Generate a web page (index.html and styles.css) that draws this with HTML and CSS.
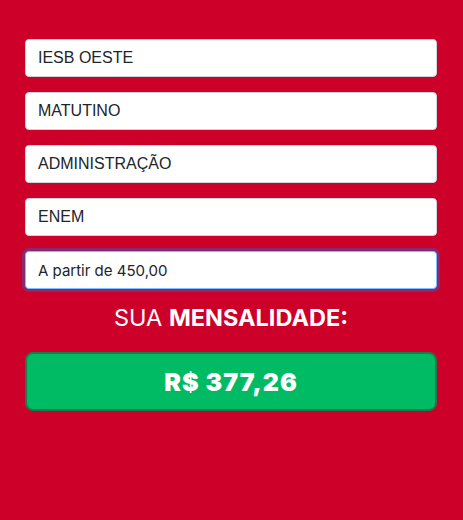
FILE: index.html
```html
<!DOCTYPE html>
<html lang="pt-BR">
<head>
<meta charset="utf-8">
<title>Mensalidade</title>
<link rel="stylesheet" href="styles.css">
</head>
<body>
<main class="calc">
  <form class="form">
    <div class="field">IESB OESTE</div>
    <div class="field">MATUTINO</div>
    <div class="field">ADMINISTRAÇÃO</div>
    <div class="field">ENEM</div>
    <div class="field field-focus">A partir de 450,00</div>
  </form>
  <h2 class="title">SUA <strong>MENSALIDADE:</strong></h2>
  <div class="price">R$ 377,26</div>
</main>
</body>
</html>
```
FILE: styles.css
```css
html, body {
  margin: 0;
  padding: 0;
  background: #cc0029;
  height: 100%;
}
.calc {
  padding: 39px 26px 0 25px;
  display: flex;
  flex-direction: column;
}
.form {
  display: flex;
  flex-direction: column;
  gap: 15px;
  margin: 0;
}
.field {
  box-sizing: border-box;
  height: 38px;
  background: #fff;
  border: 1px solid #ced4da;
  border-radius: 4px;
  padding: 0 12px;
  display: flex;
  align-items: center;
  font-family: "Liberation Sans", Arial, sans-serif;
  font-size: 16px;
  color: #212529;
}
.field-focus {
  border-color: #80bdff;
  box-shadow: 0 0 0 3px rgba(0, 123, 255, 0.35);
  font-family: Inter, "Liberation Sans", sans-serif;
  font-size: 15px;
}
.title {
  margin: 16px 0 0;
  text-align: center;
  font-family: Inter, "Liberation Sans", sans-serif;
  font-weight: 400;
  font-size: 23.5px;
  line-height: 26px;
  color: #fff;
  letter-spacing: 0;
}
.title strong {
  font-weight: 700;
}
.price {
  margin-top: 21px;
  box-sizing: border-box;
  height: 59px;
  background: #00bb63;
  border: 2px solid #1c7a4c;
  border-radius: 8px;
  display: flex;
  align-items: center;
  justify-content: center;
  font-family: Inter, "Liberation Sans", sans-serif;
  font-weight: 900;
  font-size: 25px;
  color: #fff;
  letter-spacing: 1px;
}
```
